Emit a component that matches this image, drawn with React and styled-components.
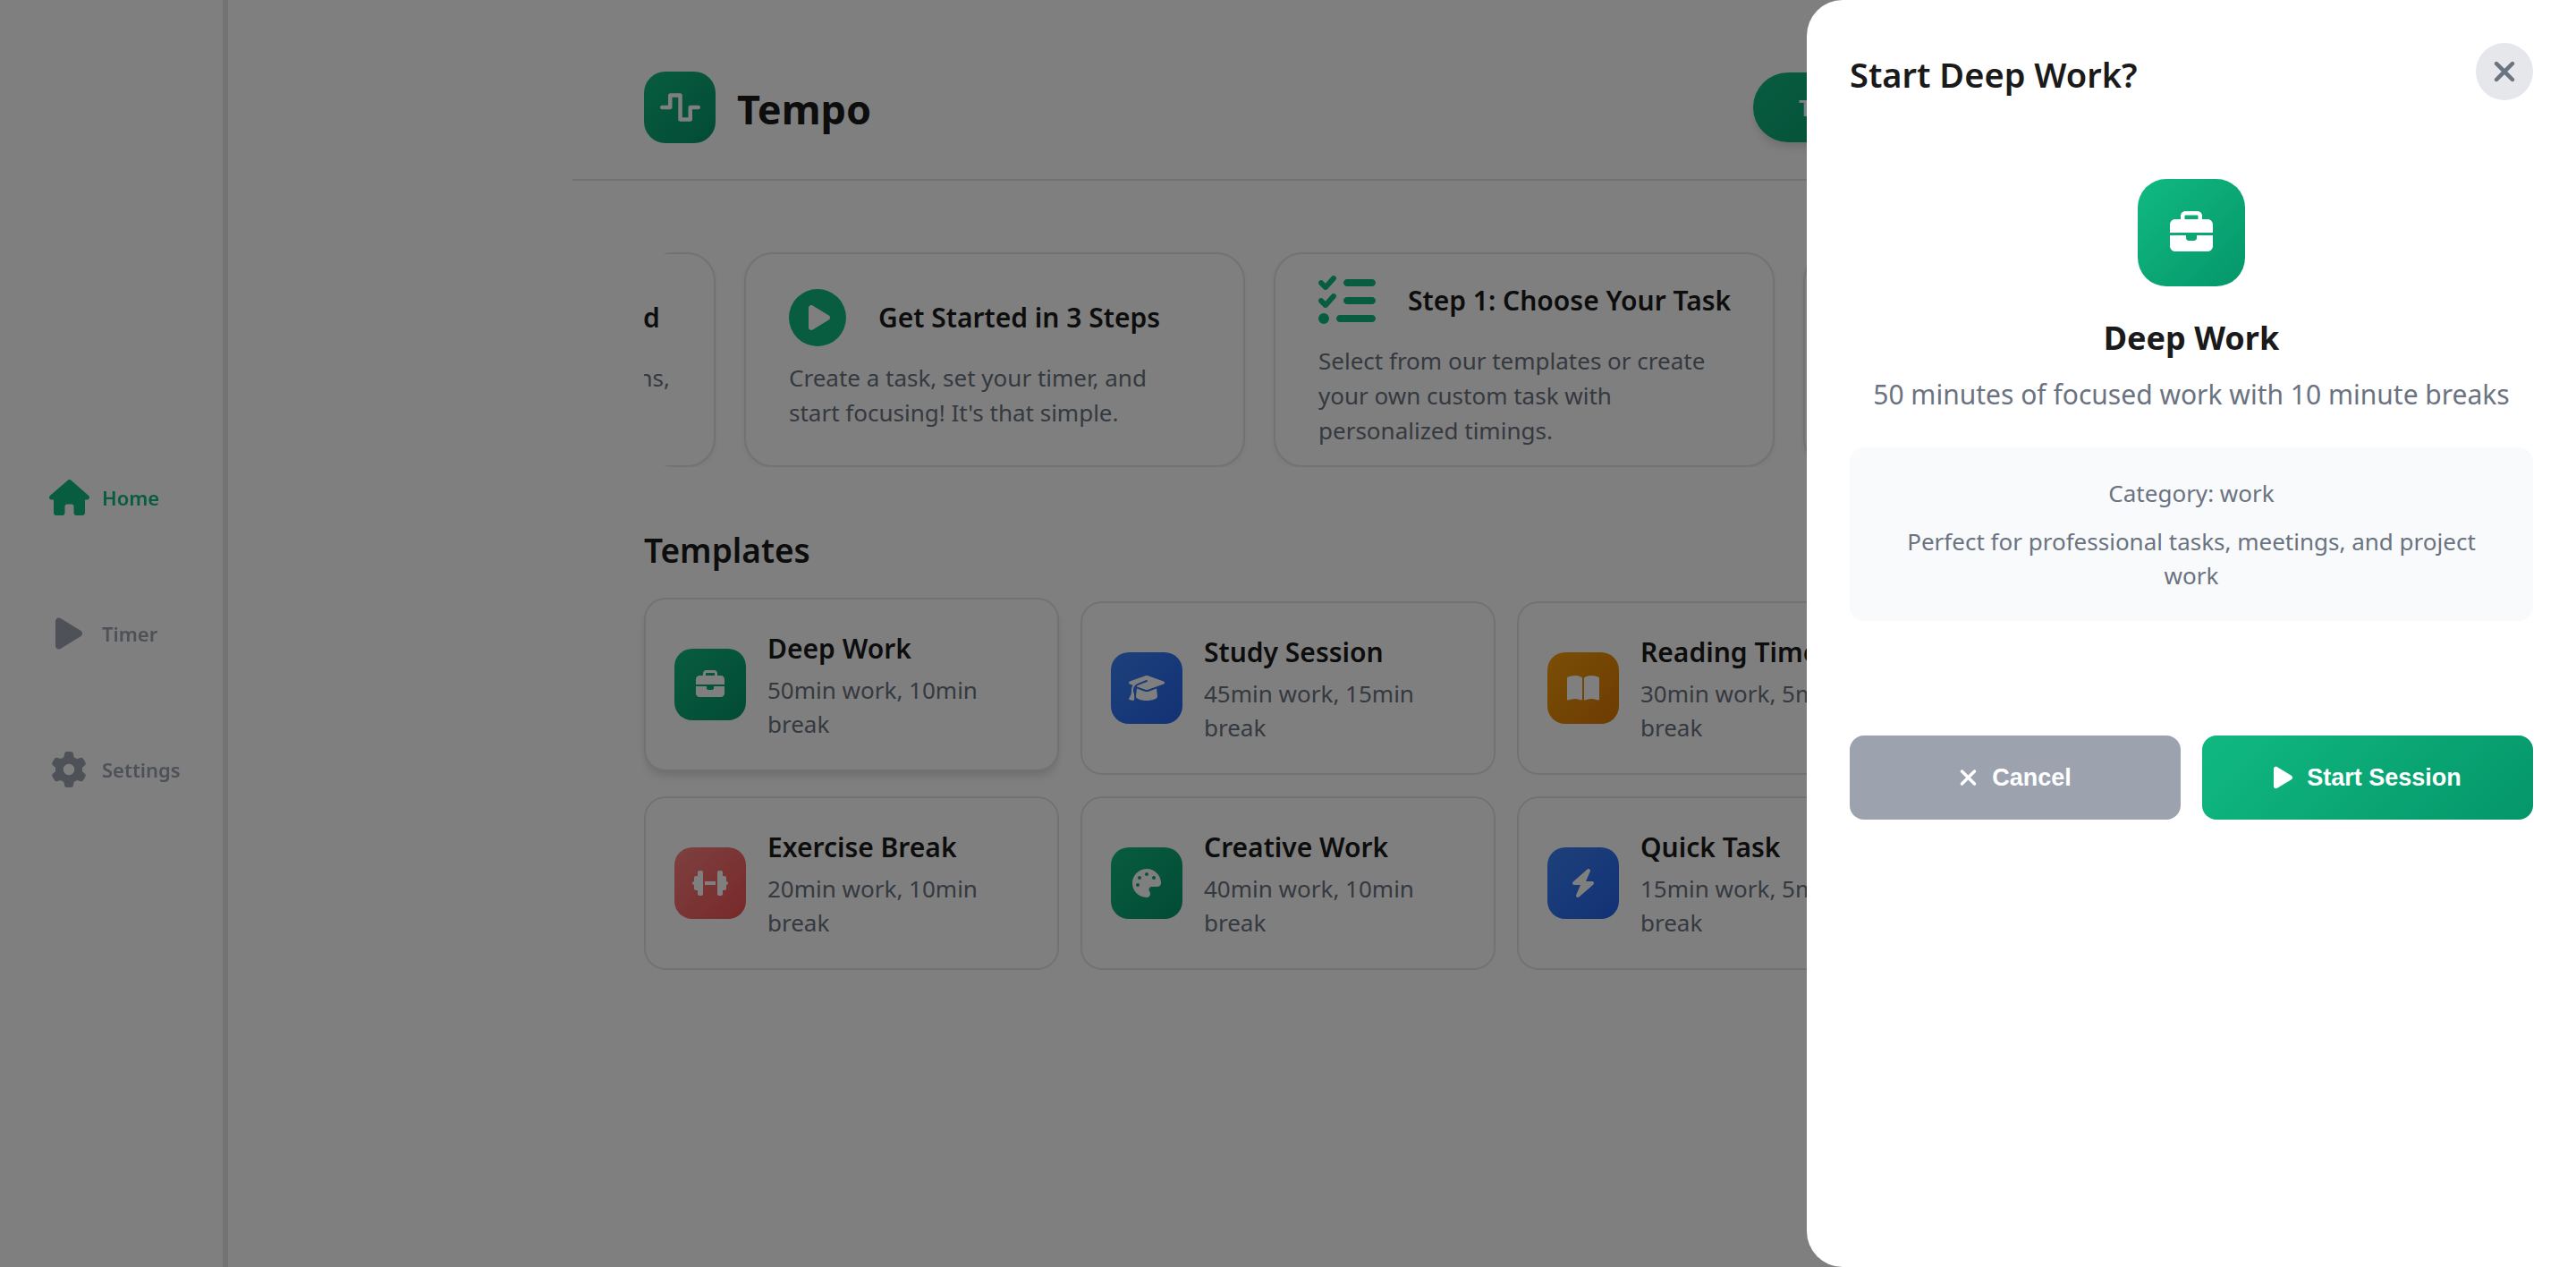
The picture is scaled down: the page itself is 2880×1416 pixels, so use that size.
import React from 'react';
import styled, { createGlobalStyle, css } from 'styled-components';
import {
  FaBolt,
  FaBookOpen,
  FaBriefcase,
  FaCirclePlay,
  FaClock,
  FaDumbbell,
  FaGear,
  FaGraduationCap,
  FaHouse,
  FaListCheck,
  FaPalette,
  FaPlay,
  FaWaveSquare,
  FaXmark,
} from 'react-icons/fa6';

const color = {
  ink: '#1a1a1a',
  muted: '#6b7280',
  faint: '#9ca3af',
  line: '#e5e5e5',
  rail: '#e5e7eb',
  green: '#10b981',
};

const gradient = {
  green: 'linear-gradient(135deg, #10b981, #059669)',
  blue: 'linear-gradient(135deg, #3b82f6, #2563eb)',
  amber: 'linear-gradient(135deg, #f59e0b, #d97706)',
  red: 'linear-gradient(135deg, #fc8181, #f05252)',
};

const shadow = '0 8px 12px -2px rgba(0, 0, 0, 0.1), 0 4px 8px -2px rgba(0, 0, 0, 0.06)';

const headingWeight = 600;

const GlobalStyle = createGlobalStyle`
  *, *::before, *::after { box-sizing: border-box; }
  body {
    margin: 0;
    background: #fff;
    color: ${color.ink};
    font-family: "Segoe UI", "Noto Sans", "Open Sans", sans-serif;
    font-size: 26px;
    line-height: 38px;
    overflow: hidden;
  }
  h1, h2, h3, p { margin: 0; }
  button { font: inherit; color: inherit; border: 0; cursor: pointer; }
  a { color: inherit; text-decoration: none; }
`;

/* $wide gives the width of icons that are not square */
const Glyph = styled.span`
  display: flex;
  flex: none;
  align-items: center;
  justify-content: center;
  svg {
    display: block;
    height: ${(p) => p.$size}px;
    width: ${(p) => p.$wide || p.$size}px;
  }
`;

/* Sidebar */
const Sidebar = styled.nav`
  position: fixed;
  inset: 0 auto 0 0;
  width: 255px;
  display: flex;
  flex-direction: column;
  justify-content: center;
  gap: 96px;
  padding-left: 52px;
  border-right: 6px solid ${color.rail};
`;

const NavLink = styled.a`
  display: flex;
  align-items: center;
  gap: 12px;
  height: 56px;
  font-size: 22px;
  font-weight: 600;
  color: ${(p) => (p.$active ? color.green : color.faint)};
`;

const NavGlyph = styled(Glyph)`
  width: 50px;
`;

/* Page */
const Page = styled.main`
  max-width: 1600px;
  margin: 0 auto;
  padding-top: 40px;
`;

const Header = styled.header`
  display: flex;
  align-items: center;
  justify-content: space-between;
  padding: 40px 80px;
  border-bottom: 2px solid ${color.line};
`;

const Brand = styled.div`
  display: flex;
  align-items: center;
  gap: 24px;
`;

const BrandName = styled.h1`
  padding-top: 4px;
  font-size: 45px;
  line-height: 60px;
  font-weight: 700;
`;

const Tile = styled(Glyph)`
  width: ${(p) => p.$box}px;
  height: ${(p) => p.$box}px;
  border-radius: ${(p) => p.$radius}px;
  background: ${(p) => gradient[p.$tone]};
  color: #fff;
`;

const PillButton = styled.button`
  min-width: 200px;
  padding: 20px 48px;
  border-radius: 40px;
  background: ${gradient.green};
  box-shadow: ${shadow};
  color: #fff;
  font-weight: 600;
`;

const Content = styled.div`
  display: flex;
  flex-direction: column;
  gap: 68px;
  padding: 80px;
`;

/* Carousel */
const Carousel = styled.section`
  overflow: hidden;
  border-radius: 32px;
`;

const Track = styled.div`
  display: flex;
  gap: 32px;
  transform: translateX(-480px);
`;

const Slide = styled.article`
  flex: 0 0 560px;
  min-width: 0;
  min-height: 240px;
  display: flex;
  flex-direction: column;
  justify-content: center;
  gap: 16px;
  padding: 0 48px;
  border: 2px solid ${color.line};
  border-radius: 32px;
  background: #fff;
  box-shadow: 0 2px 6px rgba(0, 0, 0, 0.06);
`;

const SlideHead = styled.div`
  display: flex;
  align-items: center;
  gap: 36px;
  color: ${color.green};
`;

const SlideTitle = styled.h3`
  font-size: 30px;
  line-height: 44px;
  font-weight: ${headingWeight};
  white-space: nowrap;
  color: ${color.ink};
`;

const SlideText = styled.p`
  line-height: 39px;
  color: ${color.muted};
`;

/* Templates */
const Templates = styled.section`
  display: flex;
  flex-direction: column;
  gap: 32px;
`;

const SectionTitle = styled.h2`
  font-size: 37px;
  line-height: 50px;
  font-weight: ${headingWeight};
`;

const TemplateGrid = styled.div`
  display: grid;
  grid-template-columns: repeat(3, 1fr);
  gap: 24px;
`;

const TemplateCard = styled.button`
  display: flex;
  align-items: center;
  gap: 24px;
  padding: 32px;
  border: 2px solid ${color.line};
  border-radius: 24px;
  background: #fff;
  text-align: left;
  ${(p) =>
    p.$raised &&
    css`
      transform: translateY(-4px);
      box-shadow: ${shadow};
    `}
`;

const TemplateText = styled.span`
  display: flex;
  flex-direction: column;
  gap: 4px;
`;

const TemplateName = styled.span`
  font-size: 30px;
  line-height: 46px;
  font-weight: ${headingWeight};
`;

const TemplateMeta = styled.span`
  color: ${color.muted};
`;

/* Drawer */
const Backdrop = styled.div`
  position: fixed;
  inset: 0;
  background: rgba(0, 0, 0, 0.5);
`;

const Drawer = styled.aside`
  position: fixed;
  inset: 0 0 0 auto;
  width: 860px;
  display: flex;
  flex-direction: column;
  padding: 48px;
  border-radius: 40px 0 0 40px;
  background: #fff;
`;

const DrawerHead = styled.div`
  display: flex;
  align-items: center;
  justify-content: space-between;
  margin-bottom: 88px;
`;

const DrawerTitle = styled.h2`
  padding-top: 6px;
  font-size: 38px;
  line-height: 50px;
  font-weight: ${headingWeight};
`;

const CloseButton = styled.button`
  display: grid;
  place-items: center;
  width: 64px;
  height: 64px;
  padding: 0;
  border-radius: 50%;
  background: ${color.rail};
  color: ${color.muted};
`;

const Summary = styled.div`
  display: flex;
  flex-direction: column;
  align-items: center;
  text-align: center;
  color: ${color.muted};
`;

const SummaryName = styled.h3`
  margin: 32px 0 14px;
  font-size: 36px;
  line-height: 52px;
  font-weight: 700;
  color: ${color.ink};
`;

const SummaryText = styled.p`
  margin-bottom: 36px;
  font-size: 30px;
  line-height: 46px;
`;

const InfoBox = styled.div`
  align-self: stretch;
  display: flex;
  flex-direction: column;
  gap: 16px;
  padding: 32px 40px;
  border-radius: 16px;
  background: #f8fafc;
`;

const Actions = styled.div`
  display: grid;
  grid-template-columns: 1fr 1fr;
  gap: 24px;
  margin-top: 128px;
`;

const ActionButton = styled.button`
  display: flex;
  align-items: center;
  justify-content: center;
  gap: 16px;
  padding: 32px;
  border-radius: 16px;
  background: ${(p) => (p.$primary ? gradient.green : color.faint)};
  color: #fff;
  font: 700 27px/30px Arial, "Liberation Sans", sans-serif;
`;

const navItems = [
  { label: 'Home', icon: FaHouse, wide: 45, active: true },
  { label: 'Timer', icon: FaPlay },
  { label: 'Settings', icon: FaGear },
];

const slides = [
  {
    icon: FaClock,
    title: 'Keep Clear and Focused',
    text: 'Pick focus hours, plan break sessions, and keep your rhythm.',
  },
  {
    icon: FaCirclePlay,
    title: 'Get Started in 3 Steps',
    text: "Create a task, set your timer, and start focusing! It's that simple.",
  },
  {
    icon: FaListCheck,
    title: 'Step 1: Choose Your Task',
    text: 'Select from our templates or create your own custom task with personalized timings.',
  },
  { icon: FaClock, title: 'Step 2' },
];

const templates = [
  { name: 'Deep Work', meta: '50min work, 10min break', icon: FaBriefcase, tone: 'green', raised: true },
  { name: 'Study Session', meta: '45min work, 15min break', icon: FaGraduationCap, wide: 40, tone: 'blue' },
  { name: 'Reading Time', meta: '30min work, 5min break', icon: FaBookOpen, wide: 36, tone: 'amber' },
  { name: 'Exercise Break', meta: '20min work, 10min break', icon: FaDumbbell, wide: 40, tone: 'red' },
  { name: 'Creative Work', meta: '40min work, 10min break', icon: FaPalette, tone: 'green' },
  { name: 'Quick Task', meta: '15min work, 5min break', icon: FaBolt, tone: 'blue' },
];

export default function App() {
  return (
    <>
      <GlobalStyle />
      <Sidebar aria-label="Main">
        {navItems.map(({ label, icon: Icon, wide, active }) => (
          <NavLink key={label} href="#" $active={active}>
            <NavGlyph $size={40} $wide={wide}><Icon /></NavGlyph>
            {label}
          </NavLink>
        ))}
      </Sidebar>

      <Page>
        <Header>
          <Brand>
            <Tile $box={80} $radius={24} $size={36} $wide={45} $tone="green"><FaWaveSquare /></Tile>
            <BrandName>Tempo</BrandName>
          </Brand>
          <PillButton type="button">Tutorial</PillButton>
        </Header>

        <Content>
          <Carousel>
            <Track>
              {slides.map(({ icon: Icon, title, text }) => (
                <Slide key={title}>
                  <SlideHead>
                    <Glyph $size={64}><Icon /></Glyph>
                    <SlideTitle>{title}</SlideTitle>
                  </SlideHead>
                  {text && <SlideText>{text}</SlideText>}
                </Slide>
              ))}
            </Track>
          </Carousel>

          <Templates>
            <SectionTitle>Templates</SectionTitle>
            <TemplateGrid>
              {templates.map(({ name, meta, icon: Icon, wide, tone, raised }) => (
                <TemplateCard key={name} type="button" $raised={raised}>
                  <Tile $box={80} $radius={20} $size={32} $wide={wide} $tone={tone}><Icon /></Tile>
                  <TemplateText>
                    <TemplateName>{name}</TemplateName>
                    <TemplateMeta>{meta}</TemplateMeta>
                  </TemplateText>
                </TemplateCard>
              ))}
            </TemplateGrid>
          </Templates>
        </Content>
      </Page>

      <Backdrop />

      <Drawer role="dialog" aria-labelledby="drawer-title">
        <DrawerHead>
          <DrawerTitle id="drawer-title">Start Deep Work?</DrawerTitle>
          <CloseButton type="button" aria-label="Close">
            <Glyph $size={36}><FaXmark /></Glyph>
          </CloseButton>
        </DrawerHead>
        <Summary>
          <Tile $box={120} $radius={32} $size={48} $tone="green"><FaBriefcase /></Tile>
          <SummaryName>Deep Work</SummaryName>
          <SummaryText>50 minutes of focused work with 10 minute breaks</SummaryText>
          <InfoBox>
            <p>Category: work</p>
            <p>Perfect for professional tasks, meetings, and project work</p>
          </InfoBox>
        </Summary>
        <Actions>
          <ActionButton type="button">
            <Glyph $size={28} $wide={21}><FaXmark /></Glyph>
            Cancel
          </ActionButton>
          <ActionButton type="button" $primary>
            <Glyph $size={28} $wide={21}><FaPlay /></Glyph>
            Start Session
          </ActionButton>
        </Actions>
      </Drawer>
    </>
  );
}
